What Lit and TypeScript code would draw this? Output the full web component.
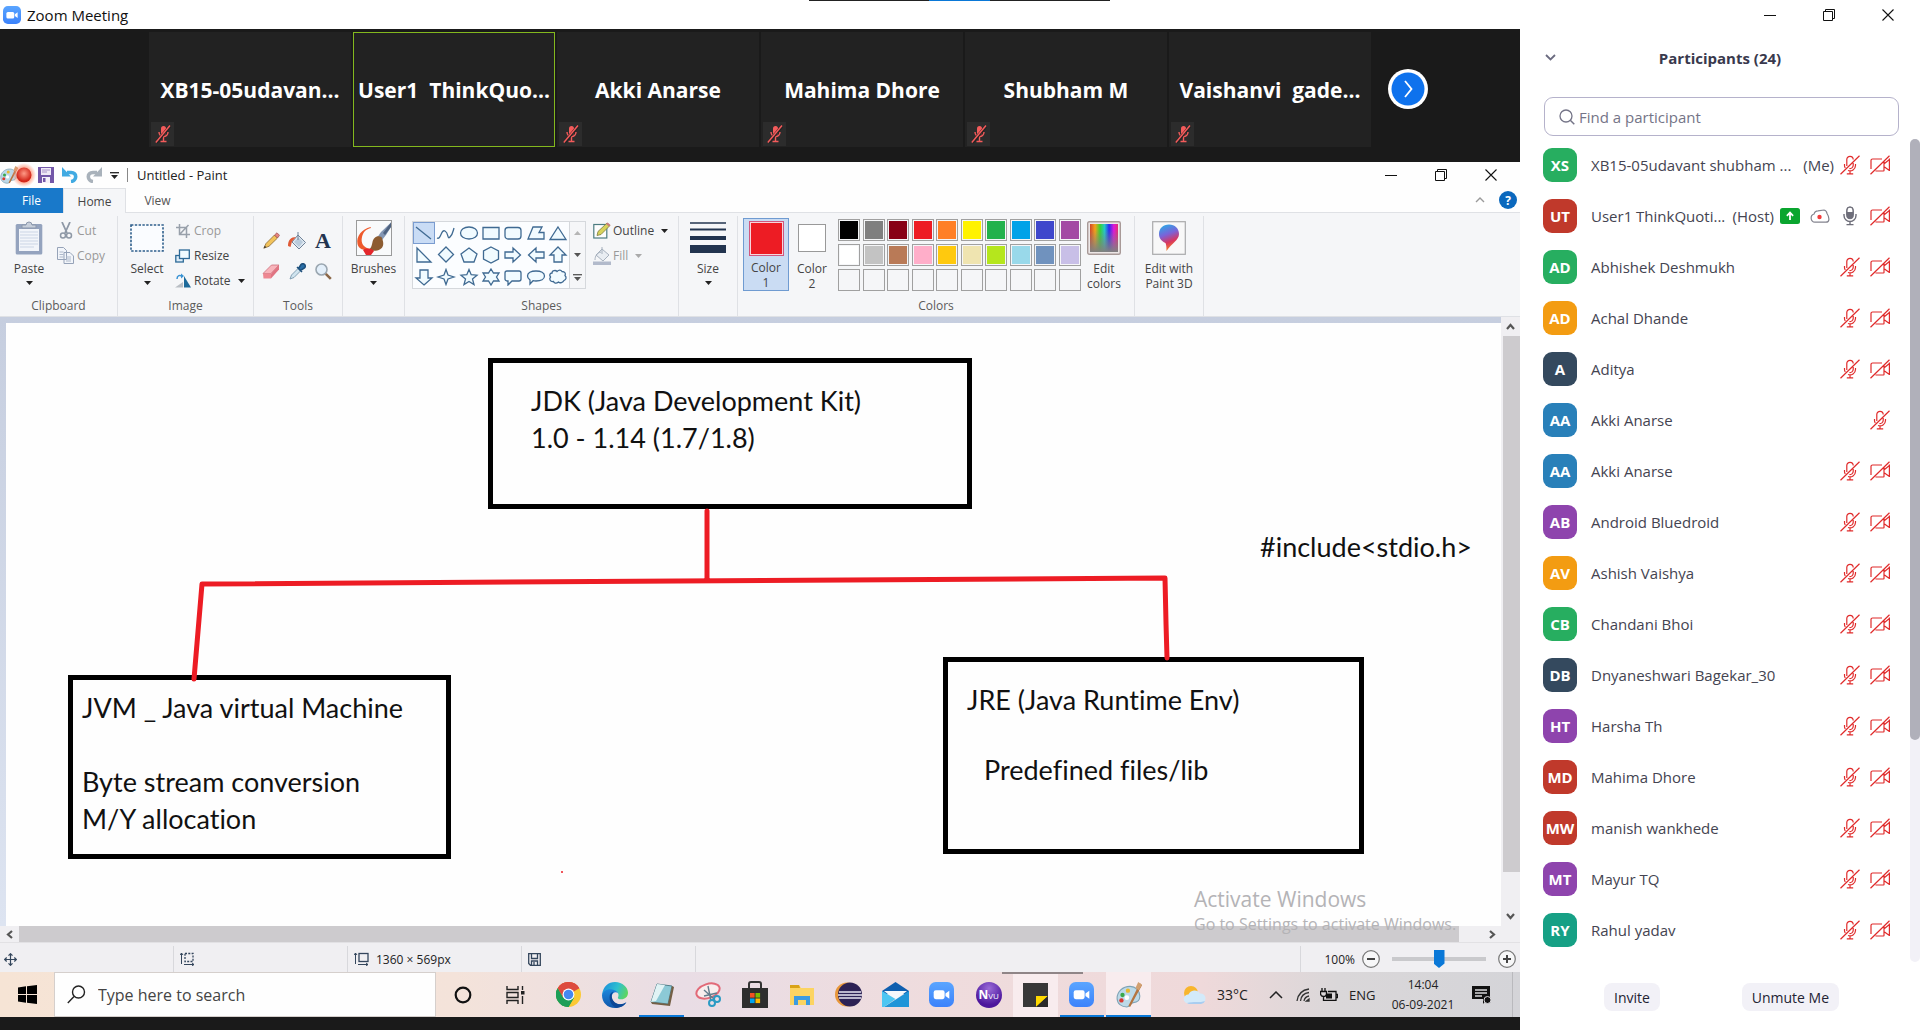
import { LitElement, html, css, svg, nothing } from "lit";
import type { TemplateResult } from "lit";
import { customElement, property } from "lit/decorators.js";
import { classMap } from "lit/directives/class-map.js";
import { styleMap } from "lit/directives/style-map.js";

type Icon = TemplateResult;

const box = (w: number, h: number, body: unknown, vb = `0 0 ${w} ${h}`): Icon =>
  html`<svg width=${w} height=${h} viewBox=${vb} fill="none" aria-hidden="true">${body}</svg>`;

const icons = {
  zoom: (s: number) =>
    box(s, s, svg`<defs><linearGradient id="zg" x1="0" y1="0" x2="0" y2="1"><stop offset="0" stop-color="#5aa5ff"/><stop offset="1" stop-color="#3b82fb"/></linearGradient></defs>
      <rect width="24" height="24" rx="6.5" fill="url(#zg)"/><rect x="4.5" y="8" width="10.5" height="8.5" rx="2" fill="#fff"/><path d="M15.8 11l3.7-2.6v7.700l-3.700-2.600z" fill="#fff"/>`, "0 0 24 24"),
  minimize: box(12, 12, svg`<path d="M0 6.500h12" stroke="#111"/>`),
  restore: box(12, 12, svg`<path d="M.5 2.500h9v9h-9zM2.500 2.500v-2h9v9h-2" stroke="#111"/>`),
  close: box(12, 12, svg`<path d="M.5.5l11 11M11.500.5l-11 11" stroke="#111" stroke-width="1.100"/>`),
  mutedSmall: box(16, 20, svg`<rect x="6" y="2" width="5" height="9" rx="2.500" fill="#f45b5b"/><path d="M4 8c0 6 9 6 9 0M8.500 13v4M5.500 17.500h6" stroke="#f45b5b" stroke-width="1.400"/><path d="M1.500 18.500L15.500 1.500" stroke="#222" stroke-width="3"/><path d="M.8 18.500L15 1.500" stroke="#f45b5b" stroke-width="1.500"/>`),
  micOff: box(20, 20, svg`<g stroke="#e02b2b" stroke-width="1.200"><path d="M6.800 11V4.500a3.200 3.200 0 016.400 0M13.200 8v2.500a3.200 3.200 0 01-3.800 3M4.500 9v1.500c0 1 .3 1.800.8 2.500M15.500 9v1.500a5.500 5.500 0 01-7.500 5M10 16v2.500M6.800 18.900h6.400M.5 19.300L19.500.7"/></g>`),
  camOff: box(20, 20, svg`<g stroke="#e02b2b" stroke-width="1.200"><path d="M1 14V5.500A1.500 1.500 0 012.500 4H12M14 6v9.500a.5.5 0 01-.5.500H5.500M19.400 3.500V16M14.500 8.500l4.900-4M14.500 12l4.900 3.500M.5 19.300L19.500.7"/></g>`),
  mic: box(14, 20, svg`<rect x="3.600" y=".8" width="6.800" height="12" rx="3.400" fill="#6e6e7a" stroke="#6e6e7a"/><path d="M4.600 6V4.200a2.400 2.400 0 014.800 0V6z" fill="#fff"/><path d="M1 8v1.500a6 6 0 0012 0V8M7 15.500V18M3.500 18.600h7" stroke="#6e6e7a" stroke-width="1.400"/>`),
  share: box(20, 16, svg`<rect width="20" height="16" rx="2.500" fill="#0aa52f"/><path d="M10 12V4.800M6.900 7.800L10 4.500l3.100 3.300" stroke="#fff" stroke-width="1.800"/>`),
  cloud: box(20, 14, svg`<path d="M5 13.200a4.200 4.200 0 01-.9-8.200A4 4 0 018 1.800L14 1a4 4 0 013 3.500c2.500 3.500 3 8.700-1 8.700z" stroke="#84848f" stroke-width="1.200"/><circle cx="9.500" cy="8" r="2.200" fill="#f43b3b"/>`),
  search: box(16, 16, svg`<circle cx="7" cy="7" r="6" stroke="#747487" stroke-width="1.300"/><path d="M11.300 11.300l4 4" stroke="#747487" stroke-width="1.500"/>`),
  chevDown: box(11, 7, svg`<path d="M1 1l4.500 4.500L10 1" stroke="#6b6b80" stroke-width="1.800"/>`),
  next: box(40, 40, svg`<circle cx="20" cy="20" r="20" fill="#fff"/><circle cx="20" cy="20" r="16.500" fill="#0e72ed"/><path d="M17 12l6.500 8L17 28" stroke="#fff" stroke-width="1.800"/>`),
  palette: (s: number) =>
    box(s, s, svg`<path d="M13 4C6 4 1 9 1 15c0 5 4 8 9 8 4 0 3-4 6-4s6-1 6-6c0-5-4-9-9-9z" fill="#bcd9e8" stroke="#7fa3b5"/><circle cx="6" cy="12" r="2" fill="#3aa84a"/><circle cx="11" cy="8" r="2" fill="#e9b92d"/><circle cx="5" cy="17" r="2" fill="#d93a32"/><circle cx="10" cy="14.500" r="2.200" fill="#fff"/><path d="M22 1l2 2-5 9-6 11-1.500-1L17 11z" fill="#b5743f"/><path d="M20.500 0l3.500 2.500-3 5-3-2z" fill="#d2a070"/>`, "0 0 24 24"),
  record: box(24, 24, svg`<defs><radialGradient id="rg" cx=".5" cy=".4"><stop offset="0" stop-color="#ff9a86"/><stop offset="1" stop-color="#d3271b"/></radialGradient><radialGradient id="rh"><stop offset=".6" stop-color="#ff8b6b"/><stop offset="1" stop-color="#ff8b6b" stop-opacity="0"/></radialGradient></defs><circle cx="12" cy="12" r="12" fill="url(#rh)" opacity=".7"/><circle cx="12" cy="12" r="7.500" fill="url(#rg)"/>`),
  save: box(16, 16, svg`<rect width="16" height="16" fill="#7357a8"/><rect x="3" y="1" width="10" height="7" fill="#efe9f6"/><path d="M4 3h8M4 5h5" stroke="#a893c8"/><rect x="4" y="10" width="8" height="6" fill="#f4f0fa"/><rect x="5" y="11" width="2.500" height="4" fill="#7357a8"/>`),
  undo: box(16, 16, svg`<path d="M5 5.500h4c6.500 0 6 8.500 0 9" stroke="#41aae2" stroke-width="3.600"/><path d="M0 0v9.500h9z" fill="#41aae2"/>`),
  redo: box(16, 16, svg`<path d="M11 5.500H7c-6.500 0-6 8.500 0 9" stroke="#a9b2bb" stroke-width="3.600"/><path d="M16 0v9.500H7z" fill="#a9b2bb"/>`),
  qat: box(9, 7, svg`<path d="M0 .7h9" stroke="#222" stroke-width="1.300"/><path d="M1 3h7L4.500 7z" fill="#222"/>`),
  more: box(9, 7, svg`<path d="M0 .7h9" stroke="#555" stroke-width="1.300"/><path d="M1 3h7L4.500 7z" fill="#555"/>`),
  caret: (c = "#222") => box(7, 4, svg`<path d="M0 0h7L3.500 4z" fill=${c}/>`),
  collapse: box(10, 6, svg`<path d="M1 5l4-4 4 4" stroke="#9a9a9a" stroke-width="1.400"/>`),
  paste: box(28, 34, svg`<rect x=".7" y="3" width="26.600" height="30.500" rx="1.500" fill="#94a3be"/><rect x="4" y="8" width="20" height="22" fill="#f2f5fa"/><path d="M5 11h18M5 14h18M5 17h18M5 20h18M5 23h18M5 26h14" stroke="#cbd5e5"/><path d="M7 7V4h4a3 3 0 016 0h4v3z" fill="#c7cfdb" stroke="#8b97ab"/>`),
  cut: box(16, 17, svg`<path d="M4 0l5 11M12 0L7 11" stroke="#8e98a6" stroke-width="1.800"/><circle cx="5" cy="13.500" r="2.500" stroke="#8e98a6" stroke-width="1.500"/><circle cx="11" cy="13.500" r="2.500" stroke="#8e98a6" stroke-width="1.500"/>`),
  copy: box(17, 17, svg`<path d="M.5.500h6l3 3v9h-9zM7 5.500h6l3.500 3.500v7.500H7z" fill="#f2f5fa" stroke="#96a3b8"/><path d="M2.500 5h4M2.500 7.500h4M2.500 10h4M9 10h5M9 12h5M9 14h5" stroke="#aeb9ca"/>`),
  select: box(34, 28, svg`<rect x="1" y="1" width="32" height="26" stroke="#2f5f8c" stroke-width="1.600" stroke-dasharray="2.400 1.400" fill="#fafcff"/>`),
  crop: box(14, 14, svg`<path d="M3.500 0v10.500H14M0 3.500h10.500V14M4 10l8.500-9" stroke="#98a0aa" stroke-width="1.500"/>`),
  resize: box(15, 14, svg`<rect x=".8" y="6.500" width="7.500" height="6.500" fill="#dcecf8" stroke="#2d6a97" stroke-width="1.300"/><rect x="4.500" y="1" width="9.800" height="8.500" fill="#effbff" stroke="#2d6a97" stroke-width="1.300"/>`),
  rotate: box(16, 15, svg`<path d="M8 14.500V9L0 14.500z" fill="#b9bec4"/><path d="M9 3v11.500h7z" fill="#1d6a9a"/><path d="M2 6c0-4 3-4 5-3" stroke="#3a93d4" stroke-width="1.500"/><path d="M6 .5l3 2.500-3 2.500z" fill="#3a93d4"/>`),
  pencil: box(17, 17, svg`<path d="M.8 16.200L3 11.500 11.500 3l3 3L6 14.300z" fill="#f2c35b" stroke="#8c6a35" stroke-width=".8"/><path d="M11.500 3L14 .8l2.500 2.500L14.500 6z" fill="#e6857f" stroke="#9b4b52" stroke-width=".7"/><path d="M.8 16.200l1-2.400 1.500 1.400z" fill="#333"/>`),
  bucket: box(18, 18, svg`<path d="M10 3l7.500 7.500L11 17l-7-7z" fill="#dfe8f1" stroke="#6f8298"/><path d="M6 10l4.500-4.500L15 10l-4 5z" fill="#b9cbdc"/><path d="M10 0v8" stroke="#6f8298"/><path d="M0 14c0-6 3-9 8-9L4 9.500 2.500 15z" fill="#e05a37"/>`),
  bucketGrey: box(18, 18, svg`<path d="M9 2l7 6-6 6-7-6z" fill="#e9edf2" stroke="#a7b1be"/><path d="M9 0v7M2 13c0-4 2-7 6-8" stroke="#a7b1be"/><rect y="14.500" width="18" height="3.500" fill="#b2bacb"/>`),
  eraser: box(18, 15, svg`<path d="M1 9.500L9.500 1H17L9 9.500z" fill="#f8b4bb" stroke="#cc6f7b" stroke-width=".8"/><path d="M1 9.500h8v5H1.500z" fill="#ee8791"/><path d="M9 9.500L17 1v4.500l-8 9z" fill="#e07482"/>`),
  picker: box(17, 17, svg`<path d="M1 16l1.500-4L9 5.500 11.500 8 5 14.500z" fill="#cfe3ee" stroke="#6d8ea5" stroke-width=".8"/><path d="M8 4l5 5M9.500 5.500L12 1.500c2-2.500 6 1 3.500 3.500L11.500 7.500z" fill="#2a6fa8" stroke="#1d4f7c" stroke-width="1.500"/>`),
  magnifier: box(17, 17, svg`<circle cx="6.500" cy="6.500" r="5.500" fill="#e3effa" stroke="#9aa6b0" stroke-width="1.600"/><path d="M10.800 10.800l5 5" stroke="#8a6647" stroke-width="2.600"/>`),
  brushes: box(36, 36, svg`<rect x=".5" y=".5" width="35" height="35" fill="#f9fafb" stroke="#9a9a9a"/><path d="M14.500 7C6 9 0 16 1.500 24c1.500 6 8 7 13 5-7-1-10-6-8.500-12 1-5 4-8 9-9z" fill="#ee5a2c"/><path d="M35 2.500L25 12l-4.500 6.500 4 3.500L30 15l5-8z" fill="#8497b4"/><path d="M35 2.500L27 13l2 2 6-8z" fill="#4e627f"/><path d="M25.500 17c-5-2-8 1-9 5s-1 6-4.500 8c7 2 20 1 13.500-13z" fill="#8d5c31"/><path d="M7 30c3-2 8-2 11 1l-3 4H10z" fill="#e3262b"/>`),
  outline: box(18, 17, svg`<rect x=".8" y="2.500" width="13" height="13.500" fill="#fdfdfd" stroke="#4c7c80" stroke-width="1.200"/><path d="M4 13.500l1-4L14 1l3 2.500-9 9z" fill="#d8d35b" stroke="#7b7a3d" stroke-width=".8"/><path d="M13 2l1.500-1.500L17.500 3 16 4.500z" fill="#c97c7c"/>`),
  size: box(36, 32, svg`<path d="M0 1h36" stroke="#22344f" stroke-width="1.400"/><path d="M0 7.500h36" stroke="#22344f" stroke-width="2"/><path d="M0 16h36" stroke="#22344f" stroke-width="4"/><path d="M0 27h36" stroke="#22344f" stroke-width="8"/>`),
  editColors: box(34, 34, svg`<defs><linearGradient id="ra"><stop offset="0" stop-color="#d0452a"/><stop offset=".18" stop-color="#f6a11a"/><stop offset=".36" stop-color="#35d233"/><stop offset=".52" stop-color="#22c8c8"/><stop offset=".68" stop-color="#2a2cf0"/><stop offset=".85" stop-color="#e018d8"/><stop offset="1" stop-color="#e03070"/></linearGradient><linearGradient id="rb" x1="0" y1="0" x2="0" y2="1"><stop offset=".2" stop-color="#808080" stop-opacity="0"/><stop offset="1" stop-color="#808080"/></linearGradient></defs><rect x=".7" y=".7" width="32.600" height="32.600" rx="1.500" fill="#ece6e6" stroke="#a89a98" stroke-width="1.400"/><rect x="3" y="3" width="28" height="28" fill="url(#ra)"/><rect x="3" y="3" width="28" height="28" fill="url(#rb)"/>`),
  paint3d: box(34, 34, svg`<defs><linearGradient id="pa" x1="0" y1="0" x2=".3" y2="1"><stop offset="0" stop-color="#1fb5ea"/><stop offset=".45" stop-color="#7b62d8"/><stop offset=".75" stop-color="#d9355f"/><stop offset="1" stop-color="#f07a2c"/></linearGradient></defs><rect x=".7" y=".7" width="32.600" height="32.600" fill="#f8f8f8" stroke="#a9a9ab" stroke-width="1.200"/><path d="M17 3.500c6 0 10 4 10 9.500 0 6-7 9-12.500 17 0-4 0-5-1-8C9 20 7 17 7 13c0-5.500 4-9.500 10-9.500z" fill="url(#pa)"/>`),
  arrow: (d: string) => box(9, 9, svg`<path d=${d} stroke="#555" stroke-width="2.200"/>`),
};

const SHAPES: [string, string][] = [
  ["Line", "M2 3l15 12"],
  ["Curve", "M1 14c4 2 4-9 8-7s2 9 5 6 3-6 4-9"],
  ["Oval", "M10 3c5 0 8.500 2.500 8.500 6S15 15 10 15 1.500 12.500 1.500 9 5 3 10 3z"],
  ["Rectangle", "M2 3.500h16v11.500H2z"],
  ["Rounded rectangle", "M5 3.500h10a3 3 0 013 3V12a3 3 0 01-3 3H5a3 3 0 01-3-3V6.500a3 3 0 013-3z"],
  ["Polygon", "M7 3h9l-3 5.500h5V15H2z"],
  ["Triangle", "M10 3l8 12.500H2z"],
  ["Right triangle", "M3 2l14 14H3z"],
  ["Diamond", "M10 1l7.500 7.500L10 16 2.500 8.500z"],
  ["Pentagon", "M10 2l8 6-3 8H5L2 8z"],
  ["Hexagon", "M10 1l7.500 4v8L10 17l-7.500-4V5z"],
  ["Right arrow", "M2 6h8V2l7.500 7-7.500 7v-4H2z"],
  ["Left arrow", "M18 6h-8V2L2.500 9l7.500 7v-4h8z"],
  ["Up arrow", "M10 1l8 8h-4v7H6V9H2z"],
  ["Down arrow", "M10 17l8-7h-4V2H6v8H2z"],
  ["Four-point star", "M10 1.500l2 5.500 6 2-6 2-2 5.500L8 11 2 9l6-2z"],
  ["Five-point star", "M10 1.500l2.200 5.200 5.800.5-4.500 3.700 1.500 5.600L10 13.500l-5 3 1.500-5.600L2 7.200l5.800-.5z"],
  ["Six-point star", "M10 1l2.500 4H18l-2.500 4 2.500 4h-5.500L10 17l-2.500-4H2l2.500-4L2 5h5.500z"],
  ["Rounded callout", "M4 3h12a2 2 0 012 2v6a2 2 0 01-2 2H9l-4 4v-4H4a2 2 0 01-2-2V5a2 2 0 012-2z"],
  ["Oval callout", "M10 3c5 0 8.500 2 8.500 5S15 13 10 13c-1 0-2 0-3-.3L4 16v-4C2.500 11 1.500 9.500 1.500 8c0-3 3.500-5 8.500-5z"],
  ["Cloud callout", "M4 5c0-3 4-3 5-1.500C11 1.500 13 2 14 3.500c3 0 4 2 3 4 2 2 1 4-1 5-1 2-4 3-5.500 1.500C8 16 6 15 5.500 13.500 2 14 1 11 2.500 9 1 7 2 5 4 5z"],
];

const PALETTE = [
  "#000000", "#7f7f7f", "#880015", "#ed1c24", "#ff7f27", "#fff200", "#22b14c", "#00a2e8", "#3f48cc", "#a349a4",
  "#ffffff", "#c3c3c3", "#b97a57", "#ffaec9", "#ffc90e", "#efe4b0", "#b5e61d", "#99d9ea", "#7092be", "#c8bfe7",
  ...Array(10).fill(""),
];

interface Person {
  initials: string;
  name: string;
  color: string;
  role?: string;
  kind?: "host" | "audio";
}
const GREEN = "#27ae60", RED = "#c0392b", ORANGE = "#f39c12", NAVY = "#34495e", BLUE = "#2980b9", PURPLE = "#8e44ad", TEAL = "#16a085";
const PEOPLE: Person[] = [
  { initials: "XS", name: "XB15-05udavant shubham ...", color: GREEN, role: "(Me)" },
  { initials: "UT", name: "User1 ThinkQuoti...", color: RED, role: "(Host)", kind: "host" },
  { initials: "AD", name: "Abhishek Deshmukh", color: GREEN },
  { initials: "AD", name: "Achal Dhande", color: ORANGE },
  { initials: "A", name: "Aditya", color: NAVY },
  { initials: "AA", name: "Akki Anarse", color: BLUE, kind: "audio" },
  { initials: "AA", name: "Akki Anarse", color: BLUE },
  { initials: "AB", name: "Android Bluedroid", color: PURPLE },
  { initials: "AV", name: "Ashish Vaishya", color: ORANGE },
  { initials: "CB", name: "Chandani Bhoi", color: GREEN },
  { initials: "DB", name: "Dnyaneshwari Bagekar_30", color: NAVY },
  { initials: "HT", name: "Harsha Th", color: PURPLE },
  { initials: "MD", name: "Mahima Dhore", color: RED },
  { initials: "MW", name: "manish wankhede", color: RED },
  { initials: "MT", name: "Mayur TQ", color: PURPLE },
  { initials: "RY", name: "Rahul yadav", color: TEAL },
];

const base = css`
  * { box-sizing: border-box; }
  button, input { font: inherit; color: inherit; margin: 0; }
  button { border: 0; background: none; padding: 0; display: flex; align-items: center; justify-content: center; }
  svg { display: block; flex: none; }
`;

@customElement("video-strip")
export class VideoStrip extends LitElement {
  static styles = [base, css`
    :host { display: grid; grid-template-columns: 1fr auto 1fr; align-items: start; background: #1a1a1a; padding: 3px 0 15px; }
    .tiles { grid-column: 2; display: flex; gap: 2px; }
    .tile { position: relative; width: 202px; height: 115px; background: #222; display: flex; align-items: center; justify-content: center; color: #fff; font-weight: 700; font-size: 21px; white-space: pre; overflow: hidden; }
    .talking { border: 1px solid #83b81e; }
    .mute { position: absolute; left: 2px; bottom: 1px; width: 23px; height: 24px; background: #2c2c2c; display: flex; align-items: center; justify-content: center; }
    .next { margin: 37px 0 0 17px; width: 40px; height: 40px; border-radius: 50%; }
  `];
  render() {
    const names = ["XB15-05udavan...", "User1  ThinkQuo...", "Akki Anarse", "Mahima Dhore", "Shubham M", "Vaishanvi  gade..."];
    return html`<div class="tiles">
      ${names.map((n, i) => html`<div class=${classMap({ tile: true, talking: i === 1 })}>${n}${i === 1 ? nothing : html`<span class="mute">${icons.mutedSmall}</span>`}</div>`)}
      </div><button class="next" aria-label="Next participants">${icons.next}</button>`;
  }
}

@customElement("paint-ribbon")
export class PaintRibbon extends LitElement {
  static styles = [base, css`
    :host { display: block; font-size: 12px; color: #444; background: #fefefe; }
    .title { display: flex; align-items: center; height: 26px; position: relative; color: #222; font-size: 13px; }
    .qat { display: grid; grid-template-columns: 12px 26px 24px 24px 24px 17px 10px; align-items: center; }
    .sep { width: 1px; height: 14px; background: #888; }
    .wins { margin-left: auto; display: flex; padding-right: 4px; }
    .wins button { width: 50px; height: 24px; }
    .tabs { display: flex; height: 25px; border-bottom: 1px solid #dfe1e5; }
    .tab { width: 63px; height: 25px; color: #555; }
    .file { background: #1979ca; color: #fff; }
    .home { background: #f5f6f8; border: 1px solid #dfe1e5; border-bottom: 0; color: #444; }
    .help { margin-left: auto; display: flex; align-items: center; gap: 14px; padding-right: 3px; }
    .q { width: 18px; height: 18px; border-radius: 50%; background: #0a68bd; color: #fff; font-weight: 700; }
    .ribbon { display: grid; grid-template-columns: 118px 136px 89px 62px 274px 59px 397px 69px 1fr; background: #f5f6f8; padding: 3px 0; height: 104px; border-bottom: 1px solid #dfe1e5; }
    .group { display: flex; flex-direction: column; border-right: 1px solid #dfe1e5; padding-top: 2px; }
    .group:last-child { border: 0; }
    .body { display: flex; height: 78px; }
    .name { text-align: center; line-height: 20px; color: #5b5b5b; }
    .big { width: 46px; height: 73px; flex-direction: column; justify-content: flex-start; line-height: 15px; }
    .pic { height: 43px; display: flex; align-items: center; padding-bottom: 3px; }
    .drop { height: 13px; display: flex; align-items: center; }
    .rows { display: flex; flex-direction: column; }
    .row { height: 25px; justify-content: flex-start; gap: 3px; }
    .row .ic { width: 17px; display: flex; justify-content: center; }
    .row .drop { padding-left: 4px; }
    .off { color: #999; }
    .clip, .img { padding-left: 6px; gap: 5px; }
    .img { gap: 4px; }
    .mid { justify-content: center; }
    .tools { display: grid; grid-template-columns: repeat(3, 26px); grid-auto-rows: 31px; padding: 7px 0 0 4px; }
    .a { font: 700 22px "Liberation Serif", serif; color: #22344f; }
    .shapes { padding: 3px 0 0 7px; gap: 7px; }
    .gallery { display: grid; grid-template-columns: 156px 16px; border: 1px solid #d5d8dc; height: 68px; background: #fbfdff; }
    .grid { display: grid; grid-template-columns: repeat(7, 1fr); grid-auto-rows: 22px; }
    .grid button.on { background: #c9dcf5; border: 1px solid #7a9cd0; }
    .scroll { display: grid; grid-auto-rows: 22px; border-left: 1px solid #d5d8dc; background: #f5f6f8; }
    .outl { margin-top: -3px; }
    .colors { padding-left: 5px; }
    .picked { background: #cadcf3; border: 1px solid #6f9bd1; }
    .chip { border: 1px solid #999; background: #fff; width: 28px; height: 28px; }
    .chip.one { width: 35px; height: 35px; border: 1px solid #d0577f; background: #ed1c24; box-shadow: inset 0 0 0 1px #f6d5dc; }
    .pal { display: grid; grid-template-columns: repeat(10, 22px); grid-auto-rows: 22px; justify-content: space-between; align-content: space-between; width: 243px; height: 72px; margin: 1px 0 0 3px; }
    .cell { border: 1px solid #a0a0a0; padding: 1px; }
    .cell i { display: block; width: 18px; height: 18px; background: #f5f6f8; }
    .wide { width: 62px; }
  `];
  private big(label: TemplateResult | string, pic: unknown, drop = false, cls = "") {
    return html`<button class="big ${cls}"><span class="pic">${pic}</span><span>${label}</span>${drop ? html`<span class="drop">${icons.caret()}</span>` : nothing}</button>`;
  }
  private row(label: string, pic: unknown, off = false, drop = "") {
    return html`<button class=${classMap({ row: true, off })}><span class="ic">${pic}</span>${label}${drop ? html`<span class="drop">${icons.caret(drop)}</span>` : nothing}</button>`;
  }
  render() {
    return html`
      <div class="title">
        <div class="qat">${icons.palette(18)}${icons.record}${icons.save}${icons.undo}${icons.redo}${icons.qat}<span class="sep"></span></div>
        <span>Untitled - Paint</span>
        <div class="wins"><button aria-label="Minimize">${icons.minimize}</button><button aria-label="Restore">${icons.restore}</button><button aria-label="Close">${icons.close}</button></div>
      </div>
      <div class="tabs">
        <button class="tab file">File</button><button class="tab home">Home</button><button class="tab">View</button>
        <div class="help"><button aria-label="Collapse ribbon">${icons.collapse}</button><button class="q" aria-label="Help">?</button></div>
      </div>
      <div class="ribbon">
        <div class="group"><div class="body clip">
          ${this.big("Paste", icons.paste, true)}
          <div class="rows">${this.row("Cut", icons.cut, true)}${this.row("Copy", icons.copy, true)}</div>
        </div><div class="name">Clipboard</div></div>
        <div class="group"><div class="body img">
          ${this.big("Select", icons.select, true)}
          <div class="rows">${this.row("Crop", icons.crop, true)}${this.row("Resize", icons.resize)}${this.row("Rotate", icons.rotate, false, "#222")}</div>
        </div><div class="name">Image</div></div>
        <div class="group"><div class="body tools">
          <button aria-label="Pencil">${icons.pencil}</button><button aria-label="Fill with color">${icons.bucket}</button><button class="a">A</button>
          <button aria-label="Eraser">${icons.eraser}</button><button aria-label="Color picker">${icons.picker}</button><button aria-label="Magnifier">${icons.magnifier}</button>
        </div><div class="name">Tools</div></div>
        <div class="group"><div class="body mid">${this.big("Brushes", icons.brushes, true)}</div></div>
        <div class="group"><div class="body shapes">
          <div class="gallery">
            <div class="grid">${SHAPES.map(([n, d], i) => html`<button class=${classMap({ on: i === 0 })} aria-label=${n}>${box(20, 18, svg`<path d=${d} stroke="#3f6a92" stroke-width="1.300" fill=${i < 2 ? "none" : "#f1fbff"}/>`)}</button>`)}</div>
            <div class="scroll"><button aria-label="Scroll up">${box(7, 4, svg`<path d="M0 4h7L3.500 0z" fill="#b5b5b5"/>`)}</button><button aria-label="Scroll down">${icons.caret("#555")}</button><button aria-label="More shapes">${icons.more}</button></div>
          </div>
          <div class="rows outl">${this.row("Outline", icons.outline, false, "#222")}${this.row("Fill", icons.bucketGrey, true, "#aaa")}</div>
        </div><div class="name">Shapes</div></div>
        <div class="group"><div class="body mid">${this.big("Size", icons.size, true)}</div></div>
        <div class="group"><div class="body colors">
          ${this.big(html`Color<br />1`, html`<span class="chip one"></span>`, false, "picked")}
          ${this.big(html`Color<br />2`, html`<span class="chip"></span>`)}
          <div class="pal">${PALETTE.map((c) => html`<button class="cell" aria-label=${c || "Custom color"}><i style=${styleMap(c ? { background: c } : {})}></i></button>`)}</div>
          ${this.big(html`Edit<br />colors`, icons.editColors)}
        </div><div class="name">Colors</div></div>
        <div class="group"><div class="body mid">${this.big(html`Edit with<br />Paint 3D`, icons.paint3d, false, "wide")}</div></div>
        <div class="group"></div>
      </div>`;
  }
}

@customElement("paint-canvas")
export class PaintCanvas extends LitElement {
  static styles = [base, css`
    :host { display: flex; flex-direction: column; flex: 1; min-height: 0; position: relative; background: #f0eff2; }
    .view { flex: 1; min-height: 0; display: flex; }
    .desk { flex: 1; min-width: 0; padding: 6px 0 0 6px; background: linear-gradient(#c6cedf 0%, #dde4f1 100%); display: flex; }
    .sheet { position: relative; flex: 1; background: #fefefe; overflow: hidden; color: #111; font: 27px/37px Lato, "Noto Sans", sans-serif; font-variant-ligatures: none; white-space: pre; }
    .node { position: absolute; border: 5px solid #000; }
    .jdk { left: 482px; top: 35px; width: 484px; height: 151px; padding: 19px 0 0 38px; }
    .jvm { left: 62px; top: 352px; width: 383px; height: 184px; padding: 9px 0 0 9px; }
    .jre { left: 937px; top: 334px; width: 421px; height: 197px; padding: 19px 0 0 19px; }
    .lib { margin-top: 33px; padding-left: 17px; }
    .inc { position: absolute; left: 1254px; top: 205px; }
    .ink { position: absolute; left: 0; top: 0; width: 100%; height: 100%; }
    .v { width: 19px; display: flex; flex-direction: column; }
    .v button, .h button { flex: none; width: 19px; height: 19px; }
    .v .thumb { flex: 536; background: #cdcbce; margin-left: 2px; }
    .v .rest { flex: 35; }
    .h { display: flex; align-items: center; height: 16px; padding-right: 18px; }
    .h .thumb { flex: 1440; height: 16px; background: #cdcbce; }
    .h .rest { flex: 24; }
    .mark { position: absolute; right: 65px; bottom: 8px; color: #b4b3b6; width: 261px; pointer-events: none; white-space: nowrap; font-size: 16px; line-height: 20px; }
    .mark b { display: block; font-weight: 400; font-size: 21px; line-height: 30px; }
  `];
  render() {
    return html`
      <div class="view">
        <div class="desk"><div class="sheet">
          <div class="node jdk">JDK (Java Development Kit)<br />1.0 - 1.14 (1.7/1.8)</div>
          <div class="node jvm">JVM _ Java virtual Machine<br /><br />Byte stream conversion<br />M/Y allocation</div>
          <div class="node jre"><div>JRE (Java Runtime Env)</div><div class="lib">Predefined files/lib</div></div>
          <div class="inc">#include&lt;stdio.h&gt;</div>
          <svg class="ink" fill="none" aria-hidden="true"><g stroke="#ed1c24" stroke-width="5" stroke-linecap="round" stroke-linejoin="round"><path d="M701 188V257M188 356L196 261L1159 255L1160 300L1161 335"/></g><circle cx="556" cy="549" r="1" fill="#ed1c24"/></svg>
        </div></div>
        <div class="v"><button aria-label="Scroll up">${icons.arrow("M1 7l3.500-4L8 7")}</button><div class="thumb"></div><div class="rest"></div><button aria-label="Scroll down">${icons.arrow("M1 2l3.500 4L8 2")}</button></div>
      </div>
      <div class="h"><button aria-label="Scroll left">${icons.arrow("M7 1L3 4.500 7 8")}</button><div class="thumb"></div><div class="rest"></div><button aria-label="Scroll right">${icons.arrow("M2 1l4 3.500L2 8")}</button></div>
      <div class="mark"><b>Activate Windows</b>Go to Settings to activate Windows.</div>`;
  }
}

@customElement("paint-status")
export class PaintStatus extends LitElement {
  static styles = [base, css`
    :host { display: flex; height: 30px; padding-top: 3px; border-top: 1px solid #e2e1e4; background: #f0eff2; font-size: 12px; color: #222; }
    .cell { width: 174px; display: flex; align-items: center; gap: 7px; padding-left: 6px; border-right: 1px solid #d8d8dc; }
    .cell:first-child { padding-left: 4px; }
    .zoomer { margin-left: auto; display: flex; align-items: center; gap: 12px; padding: 0 4px 0 23px; border-left: 1px solid #d8d8dc; }
    .pct { display: flex; align-items: center; gap: 7px; }
    input { appearance: none; width: 94px; height: 18px; background: linear-gradient(#c9c9cc, #c9c9cc) 0 50% / 100% 4px no-repeat; outline: none; }
    input::-webkit-slider-thumb { appearance: none; width: 11px; height: 18px; background: #0a78d7; clip-path: polygon(0 0, 100% 0, 100% 75%, 50% 100%, 0 75%); }
  `];
  render() {
    const s = "#34465c";
    const round = (p: string) => box(18, 18, svg`<circle cx="9" cy="9" r="8.300" stroke="#777" stroke-width="1.200" fill="#f7f7f8"/><path d=${p} stroke="#444" stroke-width="2"/>`);
    return html`
      <div class="cell">${box(13, 13, svg`<path d="M6.500 1v11M1 6.500h11M4.500 2.700l2-2 2 2M4.500 10.300l2 2 2-2M2.700 4.500l-2 2 2 2M10.300 4.500l2 2-2 2" stroke=${s} stroke-width="1.200"/>`)}</div>
      <div class="cell">${box(15, 14, svg`<path d="M1.500 12V1M0 3l1.500-2L3 3M4 12.500h10M12 11l2 1.500-2 1.500" stroke=${s}/><rect x="5" y="1.500" width="8" height="8" stroke=${s} stroke-width="1.300" stroke-dasharray="2 1.300"/>`)}</div>
      <div class="cell">${box(15, 14, svg`<path d="M1.500 12V1M0 3l1.500-2L3 3M4 12.500h10M12 11l2 1.500-2 1.500" stroke=${s}/><rect x="5" y="1.500" width="9" height="8" stroke=${s} stroke-width="1.300"/>`)}1360 × 569px</div>
      <div class="cell">${box(13, 13, svg`<path d="M.7.700h11.600v11.600H2.500L.7 10.500zM3.500 1v4.500h6V1M3.500 12V8h6v4M6 9v3" stroke=${s} stroke-width="1.300"/>`)}</div>
      <div class="zoomer"><span class="pct">100%<button aria-label="Zoom out">${round("M5 9h8")}</button></span><input type="range" aria-label="Zoom" min="0" max="100" value="50" /><button aria-label="Zoom in">${round("M5 9h8M9 5v8")}</button></div>`;
  }
}

const apps: [string, Icon, string][] = [
  ["Chrome", box(25, 25, svg`<circle cx="12" cy="12" r="12" fill="#fbc934"/><path d="M12 12L1.600 6A12 12 0 0122.400 6z" fill="#dd4b3e"/><path d="M1.600 6A12 12 0 0012 24l5.200-9L12 12 6.800 15z" fill="#1d9f58"/><path d="M12 6h10.400A12 12 0 0012 0 12 12 0 001.600 6l5.200 9z" fill="#dd4b3e"/><path d="M1.600 6A12 12 0 0012 24l5.200-9-5.200 3-5.200-3z" fill="#1d9f58"/><circle cx="12" cy="12" r="5.700" fill="#fff"/><circle cx="12" cy="12" r="4.600" fill="#4688f1"/>`, "0 0 24 24"), ""],
  ["Edge", box(26, 26, svg`<defs><linearGradient id="eg" x1="0" y1=".3" x2="1" y2=".6"><stop offset="0" stop-color="#1b8fdc"/><stop offset=".55" stop-color="#2fc0cf"/><stop offset="1" stop-color="#5fd65c"/></linearGradient><linearGradient id="eh" x1="0" y1="0" x2="0" y2="1"><stop offset="0" stop-color="#1c86dc"/><stop offset="1" stop-color="#0f57ab"/></linearGradient></defs><path d="M0 12C1 4 6 0 12 0c7 0 12 5 12 10 0 4-3 6-6 6-2.500 0-4-1-3-2.500 1-3-1-5.500-5-5.500C6 8 2 9.500 0 12z" fill="url(#eg)"/><path d="M0 12c1.500-4 5.500-6 9.500-5 2.500.5 4.500 1.500 5.300 3.200C12 8.500 9.500 10.500 9 13c-.6 4 3 8 8 7.500 2 0 4-.8 5.500-1.800C20.500 22 16.500 24 12 24 5 24 0 19 0 12z" fill="url(#eh)"/><path d="M7 14c0-3 1.500-4.500 3.800-5.500C9.500 10 8.800 11.500 9 13.500c.5 4 4 7 8 7 2 0 4-.8 5.500-1.800-2 3.300-5 4.900-8.500 5.100C10 23 7 19 7 14z" fill="#0c4796"/>`, "0 0 24 24"), ""],
  ["Notepad", box(26, 26, svg`<path d="M8 2l15 2-4 18-17-2z" fill="#8cc9d6" stroke="#517e88"/><path d="M8 2l8 1-9 16-5 1z" fill="#e0f3f5"/><path d="M23 4l2 1-4 19-18-2-1-2 17 2z" fill="#745f45"/>`), "open"],
  ["Snipping Tool", box(27, 26, svg`<ellipse cx="13" cy="9" rx="12" ry="7" transform="rotate(-18 13 9)" stroke="#e26a78" stroke-width="2" fill="#f8eeee"/><path d="M13 4l3 15M9 14l13-3M9 8l10 9" stroke="#647d8d" stroke-width="1.400"/><circle cx="17" cy="21" r="3" stroke="#2b9bc4" stroke-width="2"/><circle cx="22" cy="17" r="3" stroke="#2b9bc4" stroke-width="2"/>`), ""],
  ["Store", box(26, 27, svg`<path d="M7 8V3q0-2 2-2h8q2 0 2 2v5" stroke="#333" stroke-width="2"/><rect y="7" width="26" height="20" fill="#2e2e2e"/><path d="M8 12h4.600v4.600H8z" fill="#f25022"/><path d="M13.500 12h4.600v4.600h-4.600z" fill="#7fba00"/><path d="M8 17.500h4.600v4.600H8z" fill="#00a4ef"/><path d="M13.500 17.500h4.600v4.600h-4.600z" fill="#ffb900"/>`), ""],
  ["File Explorer", box(26, 22, svg`<path d="M1 1h9l2 3h13v17H1z" fill="#fcd462"/><path d="M1 1h9l1 3H1z" fill="#d9a317"/><path d="M5 12h16v9h-4v-5H9v5H5z" fill="#3d9be0"/>`), ""],
  ["Eclipse", box(27, 25, svg`<circle cx="12" cy="12.500" r="12" fill="#e8973a"/><circle cx="15" cy="12.500" r="12" fill="#2c2255"/><path d="M4 10h22M3 13h24M4 16h22" stroke="#e8e6f2" stroke-width="1.600"/>`), ""],
  ["Mail", box(27, 25, svg`<path d="M0 9L13.500 0 27 9v3H0z" fill="#0f5faf"/><path d="M2 9h23l-11.500 9z" fill="#f4f8fc"/><path d="M27 9L2 25h25z" fill="#1f95d8"/><path d="M0 9l13.500 8L2 25H0z" fill="#4dc6f2"/>`), ""],
  ["Zoom", icons.zoom(25), ""],
  ["Nvu", html`<span class="nvu">N<small>VU</small></span>`, ""],
  ["Sticky Notes", box(25, 24, svg`<rect width="25" height="24" fill="#383838"/><path d="M13 24V13h12z" fill="#ffd900"/><path d="M13 24l12-11v11z" fill="#2a2a2a"/>`), "lit peek"],
  ["Zoom", icons.zoom(25), "open"],
  ["Paint", icons.palette(26), "lit open"],
];

@customElement("task-bar")
export class TaskBar extends LitElement {
  static styles = [base, css`
    :host { display: flex; height: 45px; font-size: 14px; color: #222; background: linear-gradient(90deg, #f6e4d5 0%, #f4e3da 30%, #e9dde5 45%, #efdcdd 62%, #efd9da 79%, #dad7d9 88%, #d4d4d8 100%); }
    .start { width: 54px; }
    .find { display: flex; align-items: center; gap: 12px; width: 382px; background: #fefefe; border: 1px solid #d5cfcc; padding-left: 12px; }
    .find input { flex: 1; min-width: 0; border: 0; outline: 0; background: none; font-size: 16px; padding: 0; }
    .find input::placeholder { color: #444; opacity: 1; }
    .two { width: 53px; }
    .apps { display: grid; grid-template-columns: repeat(13, 1fr); width: 607px; margin-left: 3px; }
    .apps button { position: relative; border-bottom: 2px solid transparent; border-top: 2px solid transparent; margin: 0 1px; }
    .apps .lit { background: #f8ecee; }
    .apps .open { border-bottom-color: #0a78d7; }
    .peek::before { content: ""; position: absolute; left: -11px; top: -2px; width: 81px; height: 2px; background: #8f8587; z-index: 1; }
    .nvu { width: 26px; height: 26px; border-radius: 50%; background: radial-gradient(circle at 50% 25%, #9a6bd8, #4c169c 70%); color: #fff; font-size: 12px; font-weight: 700; line-height: 26px; display: block; }
    .nvu small { font-size: 8px; font-weight: 400; }
    .tray { margin-left: auto; display: grid; grid-template-columns: 34px 52px 27px 24px 29px 40px 83px 40px 8px; align-items: center; justify-items: start; }
    .eng { font-size: 13px; }
    .clock { font-size: 12px; width: 68px; line-height: 20px; text-align: center; }
    .desk { width: 1px; height: 45px; background: #b9b9bd; }
  `];
  render() {
    return html`
      <button class="start" aria-label="Start">${box(19, 19, svg`<path d="M0 2.500L8 1.300V9H0zM9 1.200L19 0v9H9zM0 10h8v7.700L0 16.500zM9 10h10v9L9 17.800z" fill="#000"/>`)}</button>
      <label class="find">${box(19, 19, svg`<circle cx="11.500" cy="7" r="6" stroke="#222" stroke-width="1.400"/><path d="M7 11.500L.8 18" stroke="#222" stroke-width="1.400"/>`)}<input type="text" placeholder="Type here to search" aria-label="Type here to search" /></label>
      <button class="two" aria-label="Cortana">${box(18, 18, svg`<circle cx="9" cy="9" r="7.300" stroke="#111" stroke-width="2.200"/>`)}</button>
      <button class="two" aria-label="Task View">${box(19, 18, svg`<path d="M1 0v3.500h11V0M1 18v-3.500h11V18M1 6.500h11v5H1zM16.500 0v4M16.500 10v8" stroke="#222" stroke-width="1.400"/><rect x="15" y="5" width="3.500" height="3.500" fill="#222"/>`)}</button>
      <div class="apps">${apps.map(([n, i, c]) => html`<button class=${c} aria-label=${n}>${i}</button>`)}</div>
      <div class="tray">
        ${box(23, 20, svg`<circle cx="8" cy="8" r="7" fill="#f8b52c"/><path d="M5 18.500a4.500 4.500 0 01.5-9A6.500 6.500 0 0117 8.500a5 5 0 011 10z" fill="#d3eafa"/><path d="M4 18a4 4 0 003 1h11a4.500 4.500 0 004-3c-5 2-12 0-18 2z" fill="#a9cdf0"/>`)}
        <span>33°C</span>
        <button aria-label="Hidden icons">${box(14, 8, svg`<path d="M1 7l6-6 6 6" stroke="#222" stroke-width="1.500"/>`)}</button>
        ${box(14, 14, svg`<path d="M1 13C2 6 6 2 13 1M4.500 13c.5-5 4-8 8.500-8.500M8 13c.5-3 2-4.500 5-5M10.500 13l2.500-2v2z" stroke="#333" stroke-width="1.300"/>`)}
        ${box(18, 13, svg`<path d="M2 0v3M5 0v3M.5 3.500h6v2a3 3 0 01-6 0zM3.500 8v4.500h12.500v-9H8M16.500 6.500h1v3h-1" stroke="#111" stroke-width="1.300"/><rect x="6" y="5.500" width="6" height="5" fill="#111"/>`)}
        <span class="eng">ENG</span>
        <span class="clock">14:04<br />06-09-2021</span>
        <button aria-label="Notifications">${box(19, 18, svg`<path d="M0 0h18v13h-3l-4 5v-5H0z" fill="#111"/><path d="M3 4h12M3 7h12M3 10h7" stroke="#d8d7da" stroke-width="1.300"/><circle cx="15.500" cy="14" r="3.500" fill="#111" stroke="#d8d7da"/>`)}</button>
        <span class="desk"></span>
      </div>`;
  }
}

@customElement("participant-row")
export class ParticipantRow extends LitElement {
  @property({ attribute: false }) person!: Person;
  static styles = [base, css`
    :host { display: flex; align-items: center; height: 51px; }
    .av { width: 34px; height: 34px; border-radius: 9px; color: #fff; font-weight: 700; font-size: 15px; display: flex; align-items: center; justify-content: center; flex: none; }
    .name { margin-left: 14px; white-space: nowrap; }
    .end { margin-left: auto; display: flex; align-items: center; gap: 10px; }
    .role { margin-right: -4px; }
    .mic { width: 20px; display: flex; justify-content: center; }
  `];
  render() {
    const p = this.person;
    return html`<span class="av" style=${styleMap({ background: p.color })}>${p.initials}</span><span class="name">${p.name}</span>
      <span class="end">${p.role ? html`<span class="role">${p.role}</span>` : nothing}
        ${p.kind === "host" ? html`${icons.share}${icons.cloud}<span class="mic">${icons.mic}</span>` : icons.micOff}
        ${p.kind === "audio" ? nothing : icons.camOff}</span>`;
  }
}

@customElement("participants-panel")
export class ParticipantsPanel extends LitElement {
  static styles = [base, css`
    :host { display: flex; flex-direction: column; width: 400px; background: #fff; color: #444451; font-size: 15px; }
    header { display: grid; grid-template-columns: 60px 1fr 60px; align-items: center; height: 57px; }
    h2 { margin: 0; font-size: 15px; text-align: center; color: #39394d; }
    .find { display: flex; align-items: center; gap: 4px; height: 39px; margin: 11px 21px 0 24px; border: 1px solid #b5b2cb; border-radius: 9px; padding-left: 14px; }
    .find input { flex: 1; min-width: 0; border: 0; outline: 0; background: none; padding: 0; }
    .find input::placeholder { color: #747487; opacity: 1; }
    .area { display: flex; flex: 1; min-height: 0; margin-top: 3px; }
    .list { flex: 1; padding: 0 20px 0 23px; overflow: hidden; }
    .bar { width: 10px; background: #f2f1f7; border-radius: 5px; }
    .bar i { display: block; height: 73%; background: #b0b0ba; border-radius: 5px; }
    footer { display: flex; justify-content: space-between; padding: 21px 81px 19px 84px; font-size: 14px; }
    footer button { height: 28px; padding: 0 10px; border-radius: 8px; background: #f2f1f7; color: #232333; }
  `];
  render() {
    return html`
      <header><button aria-label="Collapse">${icons.chevDown}</button><h2>Participants (24)</h2></header>
      <label class="find">${icons.search}<input type="text" placeholder="Find a participant" aria-label="Find a participant" /></label>
      <div class="area"><div class="list">${PEOPLE.map((p) => html`<participant-row .person=${p}></participant-row>`)}</div><div class="bar"><i></i></div></div>
      <footer><button>Invite</button><button>Unmute Me</button></footer>`;
  }
}

@customElement("app-root")
export class AppRoot extends LitElement {
  static styles = [base, css`
    :host { display: flex; flex-direction: column; height: 100vh; background: #fff; font-family: "Open Sans", "Noto Sans", sans-serif; }
    .top { position: relative; display: flex; align-items: center; gap: 6px; height: 29px; padding-left: 3px; font-size: 15px; line-height: 28px; color: #111; }
    .dock { position: absolute; top: 0; left: 50%; width: 301px; height: 1px; margin-left: -151px; background: linear-gradient(90deg, #222 40%, #0a78d7 40% 60%, #222 60%); }
    .wins { margin-left: auto; display: flex; padding-right: 3px; }
    .wins button { width: 59px; height: 28px; }
    .main { flex: 1; min-height: 0; display: flex; }
    .stage { flex: 1; min-width: 0; display: flex; flex-direction: column; background: #1a1a1a; padding-bottom: 13px; }
  `];
  render() {
    return html`
      <div class="top"><span class="dock"></span>${icons.zoom(18)}<span>Zoom Meeting</span>
        <div class="wins"><button aria-label="Minimize">${icons.minimize}</button><button aria-label="Restore">${icons.restore}</button><button aria-label="Close">${icons.close}</button></div></div>
      <div class="main">
        <div class="stage"><video-strip></video-strip><paint-ribbon></paint-ribbon><paint-canvas></paint-canvas><paint-status></paint-status><task-bar></task-bar></div>
        <participants-panel></participants-panel>
      </div>`;
  }
}
